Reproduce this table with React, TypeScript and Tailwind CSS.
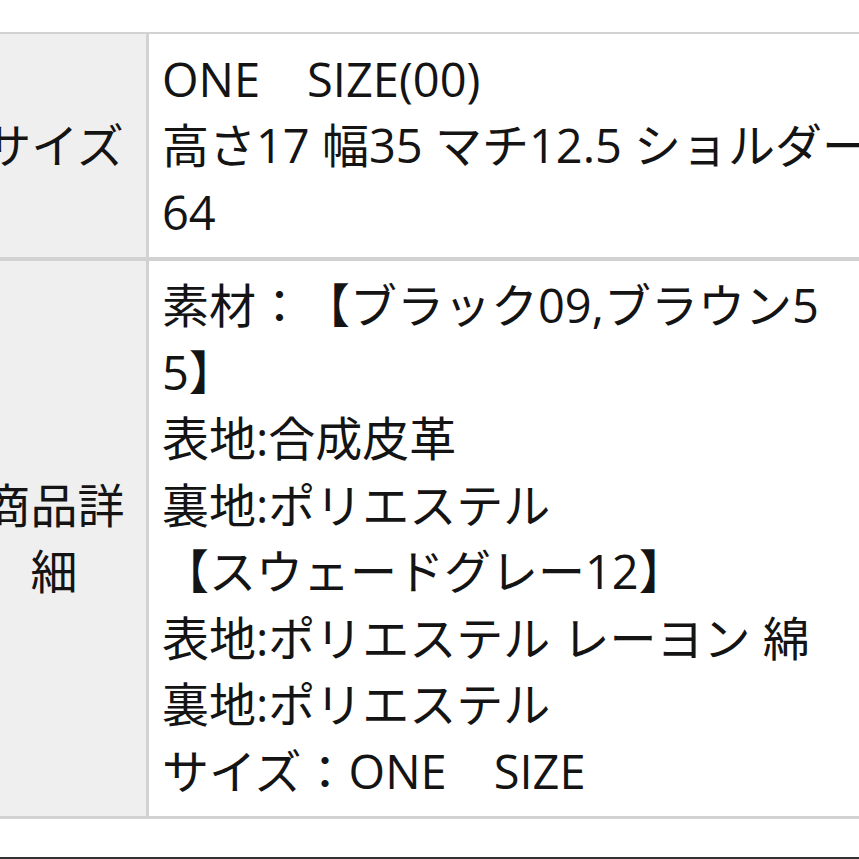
import React from "react";

const row1 = ["ONE\u3000SIZE(00)", "高さ17 幅35 マチ12.5 ショルダー", "64"];
const row2 = [
  "素材：【ブラック09,ブラウン5",
  "5】",
  "表地:合成皮革",
  "裏地:ポリエステル",
  "【スウェードグレー12】",
  "表地:ポリエステル レーヨン 綿",
  "裏地:ポリエステル",
  "サイズ：ONE\u3000SIZE",
];

function Lines({ lines }: { lines: string[] }) {
  return (
    <>
      {lines.map((l, i) => (
        <div key={i} className="whitespace-pre">
          {l}
        </div>
      ))}
    </>
  );
}

export default function App() {
  return (
    <div className="w-[859px] h-[859px] overflow-hidden bg-white flex flex-col font-['Open_Sans','Noto_Sans_CJK_JP',sans-serif] text-[47px] leading-[66.5px] text-[#141414] [text-spacing-trim:space-all]">
      <div className="pt-[32px]">
        <div className="ml-[-38px] w-[1000px] border-t-2 border-[#d2d2d2]">
          <div className="flex border-b-4 border-[#d2d2d2]">
            <div className="w-[187px] shrink-0 bg-[#efefef] border-r-[3px] border-[#d2d2d2] px-5 flex items-center justify-center text-center">
              サイズ
            </div>
            <div className="flex-1 pl-[13px] py-[11.5px]">
              <Lines lines={row1} />
            </div>
          </div>
          <div className="flex border-b-[3px] border-[#d2d2d2]">
            <div className="w-[187px] shrink-0 bg-[#efefef] border-r-[3px] border-[#d2d2d2] px-5 flex items-center justify-center text-center">
              商品詳細
            </div>
            <div className="flex-1 pl-[13px] py-[11.5px]">
              <Lines lines={row2} />
            </div>
          </div>
        </div>
      </div>
      <div className="mt-auto h-[2px] bg-[#333333]" />
    </div>
  );
}
